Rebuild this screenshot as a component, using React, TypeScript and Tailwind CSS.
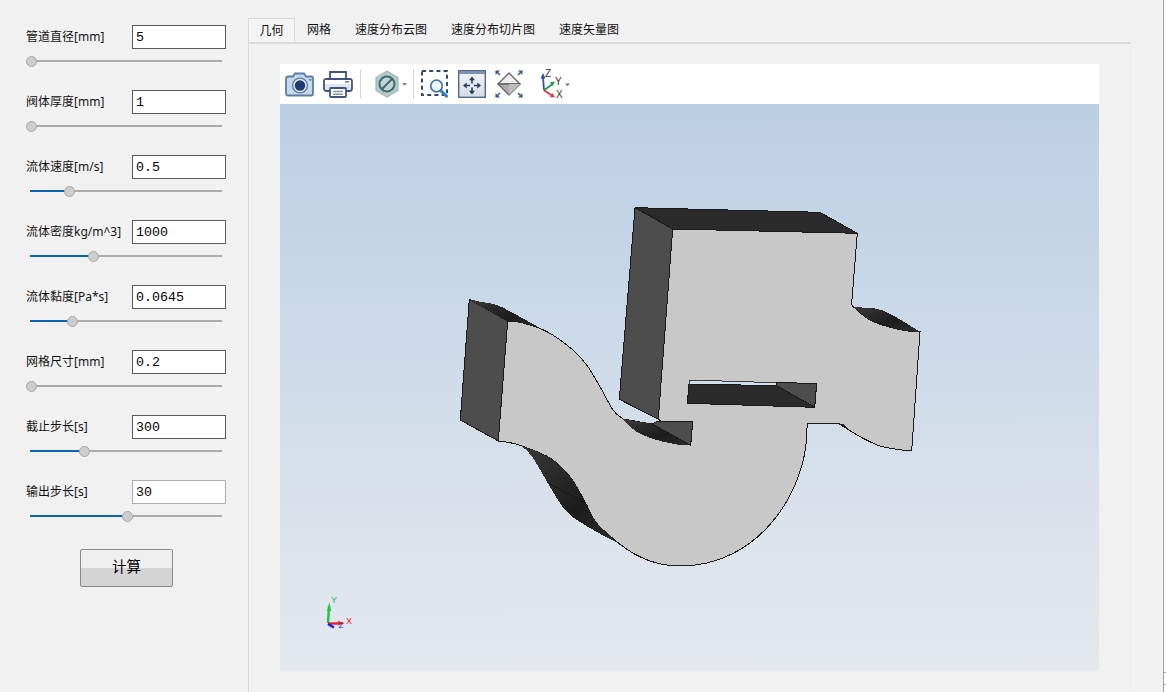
const params = [
  { label: "管道直径[mm]", value: "5", pos: 1 },
  { label: "阀体厚度[mm]", value: "1", pos: 1 },
  { label: "流体速度[m/s]", value: "0.5", pos: 39 },
  { label: "流体密度kg/m^3]", value: "1000", pos: 63 },
  { label: "流体黏度[Pa*s]", value: "0.0645", pos: 42 },
  { label: "网格尺寸[mm]", value: "0.2", pos: 1 },
  { label: "截止步长[s]", value: "300", pos: 54 },
  { label: "输出步长[s]", value: "30", pos: 97, light: true },
];

const tabs = ["网格", "速度分布云图", "速度分布切片图", "速度矢量图"];

// catmull-rom through the traced points, so the model edges stay round
const curve = (pts: number[][]) => {
  let d = "";
  for (let i = 0; i < pts.length - 1; i++) {
    const p0 = pts[i - 1] || pts[i];
    const p1 = pts[i];
    const p2 = pts[i + 1];
    const p3 = pts[i + 2] || p2;
    const c1x = p1[0] + (p2[0] - p0[0]) / 6;
    const c1y = p1[1] + (p2[1] - p0[1]) / 6;
    const c2x = p2[0] - (p3[0] - p1[0]) / 6;
    const c2y = p2[1] - (p3[1] - p1[1]) / 6;
    d += `C${c1x} ${c1y} ${c2x} ${c2y} ${p2[0]} ${p2[1]}`;
  }
  return d;
};

const rev = (pts: number[][]) => [...pts].reverse();

const topS = [[507.7, 321], [523, 323], [547, 331.7], [573, 350], [586.7, 365], [600, 386.7], [613, 410], [623, 419]];
const rightTop = [[851.7, 303.3], [853.3, 306.7], [870, 320], [890, 327.3], [908.3, 331], [920, 331.7]];
const rightBottom = [[911.7, 451], [896.7, 449.3], [880, 446], [863, 438.3], [850, 430.7], [838.3, 423.3]];
const bottomLeft = [[620, 544.3], [596.7, 523.3], [585, 501.7], [570, 476.7], [550, 458], [521.7, 446], [510, 442.7], [498.3, 441]];
const sliverLow = [[521.7, 446], [533, 458], [550, 486.7], [566.7, 511.7], [590, 528], [620, 544.3]];
const bendLow = [[623, 419], [636.7, 431.7], [656.7, 440], [680, 445], [690.7, 445.3]];
const leftTop = [[469.3, 299.3], [480, 301.7], [496.7, 305], [513, 313], [540, 328]];
const leftLow = [[540, 328], [523, 323], [507.7, 321]];
const rightUp = [[853.3, 306.7], [858.3, 307.3], [883.3, 310.7], [920, 331.7]];

const bodyPath =
  "M507.7 321" +
  curve(topS) +
  "L652 424L657 421.3L692.7 421.3L690.7 445.3L658.3 419L672.7 229L857.3 233.3L851.7 303.3" +
  curve(rightTop) +
  "L911.7 451" +
  curve(rightBottom) +
  "L807.3 423.3L806.7 433C806 490 760 566 680 566C655 566 635 556 620 544.3" +
  curve(bottomLeft) +
  "Z";

const ParamRow = ({ label, value, pos, light }: { label: string; value: string; pos: number; light?: boolean }) => (
  <div className="h-[65px] flex flex-col">
    <div className="flex items-center h-6">
      <span className="w-[132px] shrink-0 pl-[26px] text-[12px] text-[#111] whitespace-nowrap">{label}</span>
      <input
        readOnly
        value={value}
        className={
          "w-[94px] h-6 bg-white border pl-[3px] pt-px text-[13.3px] text-black outline-none font-['Liberation_Mono',monospace] " +
          (light ? "border-[#adadad]" : "border-[#5a5a5a]")
        }
      />
    </div>
    <div className="relative h-[2px] w-[192px] ml-[30px] mt-[11px] bg-[#ababab]">
      <div className="absolute left-0 top-0 h-[2px] bg-[#0a64b4]" style={{ width: pos }} />
      <div
        className="absolute -top-[4px] w-[11px] h-[11px] -ml-[5px] rounded-full bg-[#cdcdcd] border border-[#a8a8a8]"
        style={{ left: pos }}
      />
    </div>
  </div>
);

const Camera = () => (
  <svg width="30" height="28" viewBox="0 0 30 28" className="ml-[5px]">
    <path d="M3 6.500h5l2-3h9l2 3h5a2 2 0 0 1 2 2v15a2 2 0 0 1-2 2H3a2 2 0 0 1-2-2v-15a2 2 0 0 1 2-2z" fill="#c6d9ed" stroke="#5b7ca3" strokeWidth="1.800" />
    <circle cx="15" cy="15.500" r="7.400" fill="#e6eef6" stroke="#5b7ca3" strokeWidth="1.400" />
    <circle cx="15" cy="15.500" r="5.200" fill="#1f3a72" />
    <rect x="24" y="9" width="2.500" height="1.600" fill="#5b7ca3" />
  </svg>
);

const Printer = () => (
  <svg width="30" height="28" viewBox="0 0 30 28" className="ml-[8px]">
    <path d="M7 10V2h16v8" fill="#fff" stroke="#40557a" strokeWidth="1.800" />
    <rect x="1" y="9" width="28" height="12" rx="2.500" fill="#dfe6ee" stroke="#40557a" strokeWidth="1.800" />
    <rect x="2" y="10" width="26" height="4" fill="#fff" />
    <rect x="22" y="11" width="4" height="1.600" fill="#6d7f99" />
    <rect x="7" y="18" width="16" height="9" rx="1" fill="#fff" stroke="#40557a" strokeWidth="1.800" />
    <path d="M10 21.500h10M10 24.200h10" stroke="#8a97aa" strokeWidth="1.400" />
  </svg>
);

const Ban = () => (
  <svg width="36" height="28" viewBox="0 0 36 28" className="ml-[13px]">
    <path d="M13 1l11 6.500v13L13 27 2 20.500V7.500z" fill="#b5c9c9" stroke="#a3b8bc" strokeWidth="1.200" />
    <circle cx="13" cy="14" r="7.500" fill="#c4d4d4" stroke="#3f6a72" strokeWidth="2" />
    <path d="M8 19l10-10" stroke="#3f6a72" strokeWidth="2" />
    <path d="M28 13h5l-2.500 2.800z" fill="#7a7a7a" />
  </svg>
);

const ZoomArea = () => (
  <svg width="28" height="28" viewBox="0 0 28 28" className="ml-[7px]">
    <rect x="1" y="1" width="25" height="24" fill="none" stroke="#2f4a70" strokeWidth="2" strokeDasharray="4 3.200" />
    <circle cx="15.500" cy="16" r="5.800" fill="#eef4fa" stroke="#4a7aa8" strokeWidth="1.800" />
    <path d="M19.500 20.500l7 6.500" stroke="#2b7cc0" strokeWidth="3" />
  </svg>
);

const Fit = () => (
  <svg width="28" height="28" viewBox="0 0 28 28" className="ml-[9px]">
    <defs>
      <linearGradient id="fitfill" x1="0" y1="0" x2="0" y2="1">
        <stop offset="0" stopColor="#f4f6f9" />
        <stop offset="1" stopColor="#d5dce5" />
      </linearGradient>
    </defs>
    <rect x="0.700" y="0.700" width="26.600" height="26.600" fill="url(#fitfill)" stroke="#52698a" strokeWidth="1.400" />
    <rect x="1" y="1" width="26" height="3" fill="#7d92ad" />
    <path d="M14 6.500l-3 3.700h6zM14 24.500l-3-3.700h6zM5 15.500l3.700-3v6zM23 15.500l-3.700-3v6z" fill="#243c5e" />
    <path d="M14 10v3.500M14 21v-3.500M8.500 15.500h3.500M19.500 15.500H16" stroke="#243c5e" strokeWidth="1.600" />
  </svg>
);

const Iso = () => (
  <svg width="28" height="28" viewBox="0 0 28 28" className="ml-[9px]">
    <path d="M3 14L14 3l11 11z" fill="#efefef" stroke="#666" strokeWidth="1.400" strokeLinejoin="round" />
    <path d="M3 14l11 11 11-11z" fill="#adadad" stroke="#666" strokeWidth="1.400" strokeLinejoin="round" />
    <path d="M14 14L14 25 25 14z" fill="#bdbdbd" />
    <path d="M1 1l4 4M27 1l-4 4M1 27l4-4M27 27l-4-4" stroke="#3b5e8c" strokeWidth="1.600" />
    <path d="M0.500 0.500h4.500l-4.500 4.500zM27.500 0.500h-4.500l4.500 4.500zM0.500 27.500h4.500l-4.500-4.500zM27.500 27.500h-4.500l4.500-4.500z" fill="#3b5e8c" />
  </svg>
);

const Axes = () => (
  <svg width="34" height="34" viewBox="0 -2 34 34" className="ml-[17px]">
    <path d="M4 21.300L3 8" stroke="#2c55b0" strokeWidth="1.800" />
    <path d="M3 4l-2.500 5.500h5z" fill="#2c55b0" />
    <path d="M4 21.300L12 15.500" stroke="#1f9a4a" strokeWidth="1.800" />
    <path d="M15 12.500l-5 .8 2.500 4z" fill="#1f9a4a" />
    <path d="M4 21.300L12 26.500" stroke="#e0383a" strokeWidth="1.800" />
    <path d="M15 28.500l-5-.4 2.300-4z" fill="#e0383a" />
    <text x="5" y="8" fontSize="10" fontFamily="Liberation Sans" fill="#333">Z</text>
    <text x="15" y="16" fontSize="10" fontFamily="Liberation Sans" fill="#333">Y</text>
    <text x="16" y="29" fontSize="10" fontFamily="Liberation Sans" fill="#333">X</text>
    <path d="M25 14.500h5l-2.500 2.800z" fill="#7a7a7a" />
  </svg>
);

const Separator = ({ className }: { className: string }) => (
  <div className={"w-px h-[30px] bg-[#d6d6d6] " + className} />
);

const Model = () => (
  <svg viewBox="280 104 819 567" className="w-full h-full block">
    <defs>
      <linearGradient id="sliver" x1="0" y1="0" x2="1" y2="1">
        <stop offset="0" stopColor="#3a3a3a" />
        <stop offset="0.600" stopColor="#1c1c1c" />
        <stop offset="1" stopColor="#2e2e2e" />
      </linearGradient>
    </defs>

    <g shapeRendering="crispEdges">
      {/* light body */}
      <path d={bodyPath} fill="#c8c8c8" stroke="#1a1a1a" strokeWidth="1" />

      {/* left end face */}
      <path d="M469.300 299.300L507.700 321L498.300 441L460.300 420Z" fill="#4d4d4d" stroke="#1a1a1a" />
      <path d={"M469.300 299.300" + curve(leftTop) + curve(leftLow) + "Z"} fill="url(#sliver)" />

      {/* block faces */}
      <path d="M635 207.700L672.700 229L658.300 419.300L619.300 399.300Z" fill="#4d4d4d" stroke="#1a1a1a" />
      <path d="M635 207.700L820 212.300L857.300 233.300L672.700 229Z" fill="#2b2b2b" stroke="#1a1a1a" />

      {/* right sliver */}
      <path d={"M853.300 306.700" + curve(rightUp) + curve(rev(rightTop.slice(1))) + "Z"} fill="url(#sliver)" />
      <path d="M838.300 423.300L843 424L850 430.700Z" fill="#222" />

      {/* inner bend */}
      <path d={"M623 419L652 424L690.700 445.300" + curve(rev(bendLow)) + "Z"} fill="url(#sliver)" />
      <path d="M652.300 424L657 421.300L692.700 421.300L690.700 445.300Z" fill="#4d4d4d" stroke="#1a1a1a" />

      {/* slot */}
      <path d="M689.300 380L776.700 382.700L776.700 385.700L689 384Z" fill="#d0deeb" stroke="#1a1a1a" strokeWidth="0.800" />
      <path d="M776.700 382.700L816.700 383.300L814.700 407.300L776.700 385.700Z" fill="#4d4d4d" stroke="#1a1a1a" />
      <path d="M689 384L776.700 385.700L814.700 407.300L687.300 403.300Z" fill="#2b2b2b" stroke="#1a1a1a" />

      {/* lower sliver */}
      <path d={"M521.700 446" + curve(sliverLow) + curve(bottomLeft.slice(0, 6)) + "Z"} fill="url(#sliver)" />
      <path d="M550 484L585 502.300" stroke="#111" strokeWidth="0.700" />
    </g>

    {/* corner triad */}
    <path d="M328 623L329 606" stroke="#18c93a" strokeWidth="2.400" />
    <path d="M329.200 602l-2 9h4z" fill="#18c93a" />
    <path d="M328 623.500H341" stroke="#e8222a" strokeWidth="2.400" />
    <path d="M345 623l-7-2v4z" fill="#e8222a" />
    <path d="M328 624L334 627.500" stroke="#1a22e0" strokeWidth="2.600" />
    <text x="331" y="603" fontSize="9" fontFamily="Liberation Sans" fill="#22c040">Y</text>
    <text x="346" y="624" fontSize="9" fontFamily="Liberation Sans" fill="#e8222a">X</text>
    <text x="338.500" y="628" fontSize="8" fontFamily="Liberation Sans" fill="#1a22e0">Z</text>
  </svg>
);

const App = () => {
  return (
    <div className="flex w-[1166px] h-[692px] overflow-hidden bg-[#f1f1f1] font-['Noto_Sans','Noto_Sans_CJK_SC',sans-serif]">
      <aside className="w-[248px] shrink-0 pt-[25px] flex flex-col">
        {params.map((p) => (
          <ParamRow key={p.label} {...p} />
        ))}
        <button className="w-[93px] h-[38px] ml-[80px] mt-[4px] pb-[3px] rounded-[2px] border border-[#8a8a8a] bg-[linear-gradient(#efefef_50%,#d4d4d4_50%)] text-[14.5px] text-black">
          计算
        </button>
      </aside>

      <main className="w-[883px] shrink-0 pt-[18px] flex flex-col">
        <div className="flex h-6 text-[12px] text-[#111]">
          <div className="w-[47px] flex items-center justify-center bg-[#f4f4f4] border border-b-0 border-[#d9d9d9]">几何</div>
          {tabs.map((t) => (
            <div key={t} className="px-3 flex items-center whitespace-nowrap">
              {t}
            </div>
          ))}
        </div>
        <div className="flex-1 min-h-0 border-t-2 border-l border-r border-t-[#d9d9d9] border-l-[#d9d9d9] border-r-[#ececec] pt-[20px] pl-[31px] pr-[31px] pb-[21px]">
          <div className="h-full flex flex-col">
            <div className="h-10 shrink-0 bg-white flex items-center">
              <Camera />
              <Printer />
              <Separator className="ml-[7px]" />
              <Ban />
              <Separator className="ml-[3px]" />
              <ZoomArea />
              <Fit />
              <Iso />
              <Axes />
            </div>
            <div className="flex-1 min-h-0 bg-linear-to-b from-[#bbcfe5] to-[#e5e9ee]">
              <Model />
            </div>
          </div>
        </div>
      </main>

      <div className="flex-1" />
      <div className="w-[3px] shrink-0 bg-white border-l border-[#a0a0a0] flex flex-col pt-[672px]">
        <div className="h-px bg-[#a0a0a0]" />
        <div className="h-px bg-[#a0a0a0] mt-[11px]" />
      </div>
    </div>
  );
};

export default App;
